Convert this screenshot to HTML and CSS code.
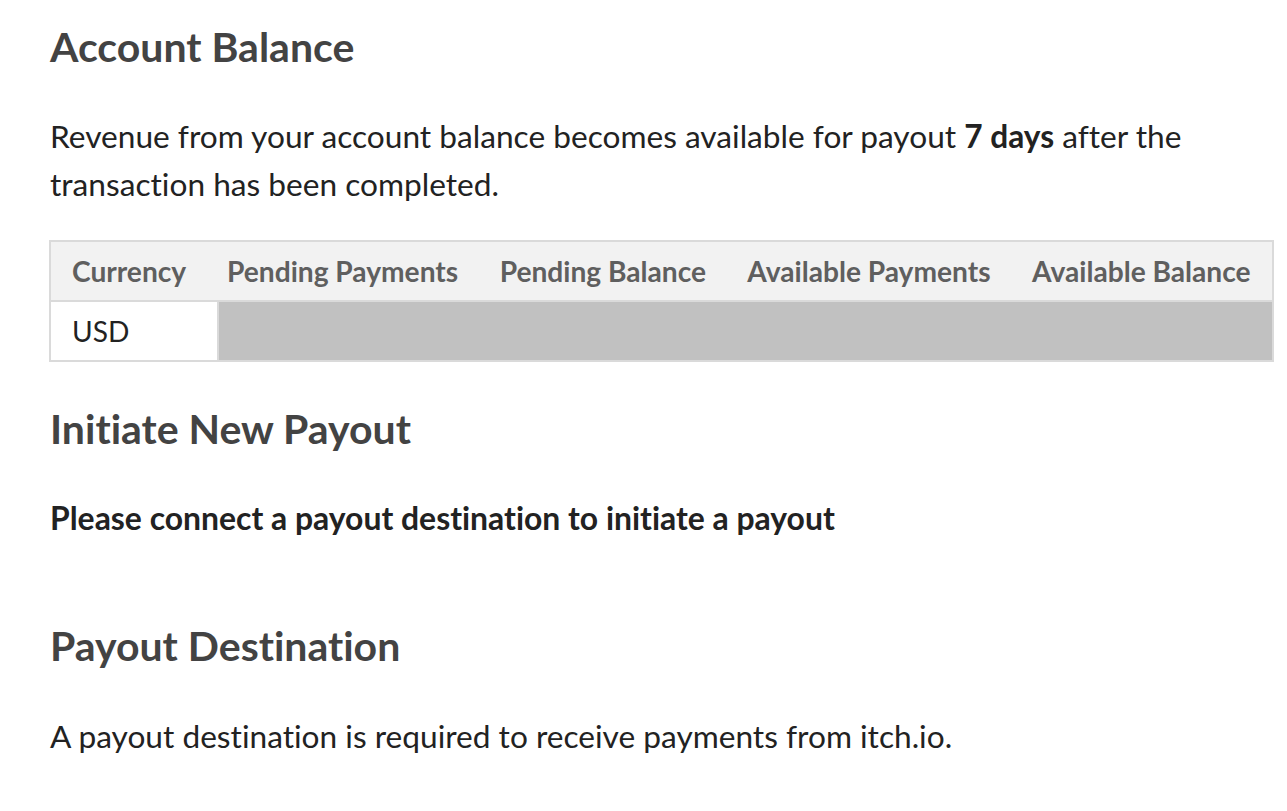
FILE: index.html
```html
<!DOCTYPE html>
<html>
<head>
<meta charset="utf-8">
<link rel="stylesheet" href="styles.css">
</head>
<body>
<div class="page">
  <h2 class="heading">Account Balance</h2>
  <p class="text">Revenue from your account balance becomes available for payout <strong>7 days</strong> after the transaction has been completed.</p>
  <table class="balance">
    <thead>
      <tr>
        <th class="c1">Currency</th>
        <th>Pending Payments</th>
        <th>Pending Balance</th>
        <th>Available Payments</th>
        <th>Available Balance</th>
      </tr>
    </thead>
    <tbody>
      <tr>
        <td class="cur c1">USD</td>
        <td class="blank first"></td>
        <td class="blank"></td>
        <td class="blank"></td>
        <td class="blank"></td>
      </tr>
    </tbody>
  </table>
  <h2 class="heading second">Initiate New Payout</h2>
  <p class="notice">Please connect a payout destination to initiate a payout</p>
  <h2 class="heading third">Payout Destination</h2>
  <p class="text last">A payout destination is required to receive payments from itch.io.</p>
</div>
</body>
</html>
```

FILE: styles.css
```css
html, body {
  margin: 0;
  padding: 0;
  background: #fff;
}
body {
  font-family: Lato, "Noto Sans", sans-serif;
  font-variant-ligatures: none;
  color: #222;
}
.page {
  padding: 0 13px 0 50px;
}
.heading {
  font-size: 41px;
  font-weight: 700;
  color: #434343;
  margin: 0;
  line-height: 48px;
  padding-top: 23px;
}
.text {
  font-size: 31.65px;
  line-height: 48px;
  margin: 41px 0 0;
  max-width: 1150px;
}
.text strong {
  font-weight: 700;
}
.balance {
  border-collapse: collapse;
  border: 2px solid #dadada;
  margin: 32px 0 0 -1px;
  width: 1225px;
}
.balance th {
  background: #f2f2f2;
  color: #5f5f5f;
  font-weight: 700;
  font-size: 28.15px;
  text-align: left;
  height: 58px;
  padding: 0 20px;
  white-space: nowrap;
  border: 2px solid #dadada;
  border-left: none;
  border-right: none;
}
.balance td {
  font-size: 28.15px;
  height: 58px;
  padding: 0 20px;
  color: #222;
  border: 2px solid #dadada;
  border-left: none;
  border-right: none;
}
.balance .c1 {
  padding-left: 21px;
}
.balance .cur {
  background: #fff;
}
.balance .blank {
  background: #c1c1c1;
}
.balance .first {
  background: linear-gradient(to right, #fff 0 10px, #dadada 10px 12px, #c1c1c1 12px);
}
.second {
  padding-top: 43px;
}
.notice {
  font-size: 31.9px;
  font-weight: 700;
  color: #222;
  margin: 41px 0 0;
  line-height: 48px;
}
.third {
  padding-top: 80px;
}
.last {
  margin-top: 42px;
}
```
